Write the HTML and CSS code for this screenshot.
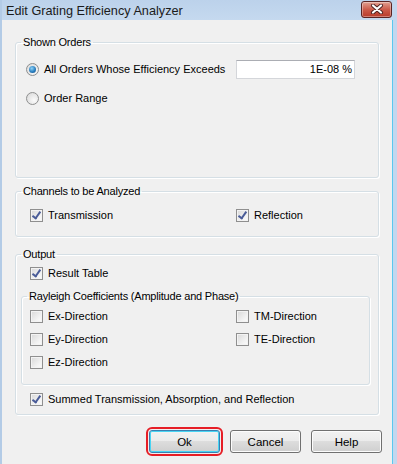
FILE: index.html
```html
<!DOCTYPE html>
<html lang="en">
<head>
    <meta charset="UTF-8">
    <title>Edit Grating Efficiency Analyzer</title>
    <link rel="stylesheet" href="styles.css">
</head>
<body>
<div class="window">
    <div class="titlebar">
        <span class="title">Edit Grating Efficiency Analyzer</span>
        <span class="close">
            <svg width="14" height="10" viewBox="0 0 14 10">
                <path d="M3 1.5 L11 8.5 M11 1.5 L3 8.5" stroke="#4a2020" stroke-width="4" stroke-linecap="round"/>
                <path d="M3 1.5 L11 8.5 M11 1.5 L3 8.5" stroke="#fff" stroke-width="2.2" stroke-linecap="round"/>
            </svg>
        </span>
    </div>

    <div class="content">
        <!-- SHOWN ORDERS -->
        <fieldset class="group shown">
            <legend>Shown Orders</legend>
            <div class="row first">
                <span class="radio on"></span>
                <span class="radiolbl">All Orders Whose Efficiency Exceeds</span>
                <span class="field">1E-08 %</span>
            </div>
            <div class="row second">
                <span class="radio"></span>
                <span class="radiolbl">Order Range</span>
            </div>
        </fieldset>

        <!-- CHANNELS -->
        <fieldset class="group channels">
            <legend>Channels to be Analyzed</legend>
            <div class="cols">
                <div class="row"><span class="check on"></span><span>Transmission</span></div>
                <div class="row"><span class="check on"></span><span>Reflection</span></div>
            </div>
        </fieldset>

        <!-- OUTPUT -->
        <fieldset class="group output">
            <legend>Output</legend>
            <div class="row indent"><span class="check on"></span><span>Result Table</span></div>

            <fieldset class="group rayleigh">
                <legend>Rayleigh Coefficients (Amplitude and Phase)</legend>
                <div class="cols tight">
                    <div class="row"><span class="check"></span><span>Ex-Direction</span></div>
                    <div class="row"><span class="check"></span><span>TM-Direction</span></div>
                    <div class="row"><span class="check"></span><span>Ey-Direction</span></div>
                    <div class="row"><span class="check"></span><span>TE-Direction</span></div>
                    <div class="row"><span class="check"></span><span>Ez-Direction</span></div>
                </div>
            </fieldset>

            <div class="row indent summed"><span class="check on"></span><span>Summed Transmission, Absorption, and Reflection</span></div>
        </fieldset>

        <!-- BOUTONS -->
        <div class="buttons">
            <span class="btn default">Ok</span>
            <span class="btn">Cancel</span>
            <span class="btn">Help</span>
        </div>
    </div>
</div>
</body>
</html>
```

FILE: styles.css
```css
body{
    margin: 0;
    font-family: "Liberation Sans", Arial, sans-serif;
    font-size: 11px;
    color: #000;
}

.window{
    width: 397px;
    height: 464px;
    box-sizing: border-box;
    border-left: 2px solid #b3cbe6;
    border-right: 4px solid #c3d7ee;
    box-shadow: inset -1px 0 0 #5bc8ee;
    background: #f0f0f0;
    overflow: hidden;
    white-space: nowrap;
}

/* BARRE DE TITRE */
.titlebar{
    height: 20px;
    display: flex;
    align-items: center;
    justify-content: space-between;
    background: linear-gradient(#bcd2eb, #c5d9ef);
    margin-right: -4px;
    padding-right: 5px;
}
.title{
    padding-left: 4px;
    font-size: 12.7px;
    color: #1b1b1b;
    margin-top: 1px;
}
.close{
    width: 29px;
    height: 15px;
    margin-bottom: 2px;
    border: 1px solid #5a2424;
    border-radius: 3px;
    background: linear-gradient(#e1a091, #cc5b4a 50%, #b83a2a);
    box-shadow: inset 0 0 0 1px rgba(255,255,255,0.35);
    display: flex;
    align-items: center;
    justify-content: center;
}

.content{
    padding: 15px 14px 0 13px;
}

/* GROUPES */
.group{
    margin: 0;
    padding: 0;
    border: 1px solid #d5dfe5;
    border-radius: 3px;
    box-shadow: inset 1px 1px 0 #fff, 1px 1px 0 #fff;
    min-width: 0;
}
.group legend{
    margin-left: 5px;
    padding: 0 2px;
    line-height: 14px;
    letter-spacing: -0.2px;
}

.row{
    height: 20px;
    display: flex;
    align-items: center;
}

.shown{padding: 10px 0 69px 0;}
.shown .row{margin-left: 10px;}
.shown .second{margin-top: 9px;}
.radiolbl{margin-left: 5px;}
.first .radiolbl{width: 192px;}

.field{
    width: 115px;
    height: 17px;
    padding-right: 2px;
    border: 1px solid #d4d6da;
    border-top-color: #abadb3;
    background: #fff;
    text-align: right;
    line-height: 17px;
}

.channels{
    margin-top: 6px;
    padding: 7px 0 11px 0;
}
.channels .cols{padding-left: 14px;}

.cols{
    display: grid;
    grid-template-columns: 206px 1fr;
}
.cols.tight{row-gap: 3px; padding-left: 8px;}

.output{
    margin-top: 10px;
    padding: 2px 0 5px 0;
}
.indent{margin-left: 14px;}
.rayleigh{
    margin: 6px 8px 0 5px;
    padding: 3px 0 12px 0;
}
.summed{margin-top: 4px;}

/* CASES A COCHER */
.check{
    width: 11px;
    height: 11px;
    border: 1px solid #8f8f8f;
    background: linear-gradient(135deg, #d8d8d8, #f4f4f4 70%, #fbfbfb);
    box-shadow: inset 0 0 0 1px #f3f3f3;
    margin-right: 5px;
    flex: none;
    position: relative;
}
.check.on::after{
    content: "";
    position: absolute;
    left: 3px;
    top: 0;
    width: 3px;
    height: 7px;
    border: solid #4a5c98;
    border-width: 0 2px 2px 0;
    transform: rotate(35deg);
}

.radio{
    width: 11px;
    height: 11px;
    border: 1px solid #8e8f8f;
    border-radius: 50%;
    background: radial-gradient(circle at 65% 65%, #fbfbfb, #d6d6d6);
    flex: none;
    position: relative;
}
.radio.on::after{
    content: "";
    position: absolute;
    left: 2px;
    top: 2px;
    width: 7px;
    height: 7px;
    border-radius: 50%;
    background: radial-gradient(circle at 40% 35%, #8fd3f7, #2a7fc0 55%, #11487e);
}

/* BOUTONS */
.buttons{
    margin-top: 15px;
    margin-right: -3px;
    display: flex;
    justify-content: flex-end;
    gap: 10px;
    font-size: 11.5px;
}
.btn{
    width: 69px;
    height: 21px;
    border: 1px solid #707070;
    border-radius: 3px;
    background: linear-gradient(#f2f2f2, #ebebeb 49%, #dddddd 50%, #cfcfcf);
    box-shadow: inset 0 0 0 1px #fcfcfc;
    display: flex;
    align-items: center;
    justify-content: center;
}
.btn.default{
    border-color: #3c7fb1;
    box-shadow: inset 0 0 0 1px #48d4f3;
    outline: 2px solid #e61e26;
    outline-offset: 1px;
}
```
